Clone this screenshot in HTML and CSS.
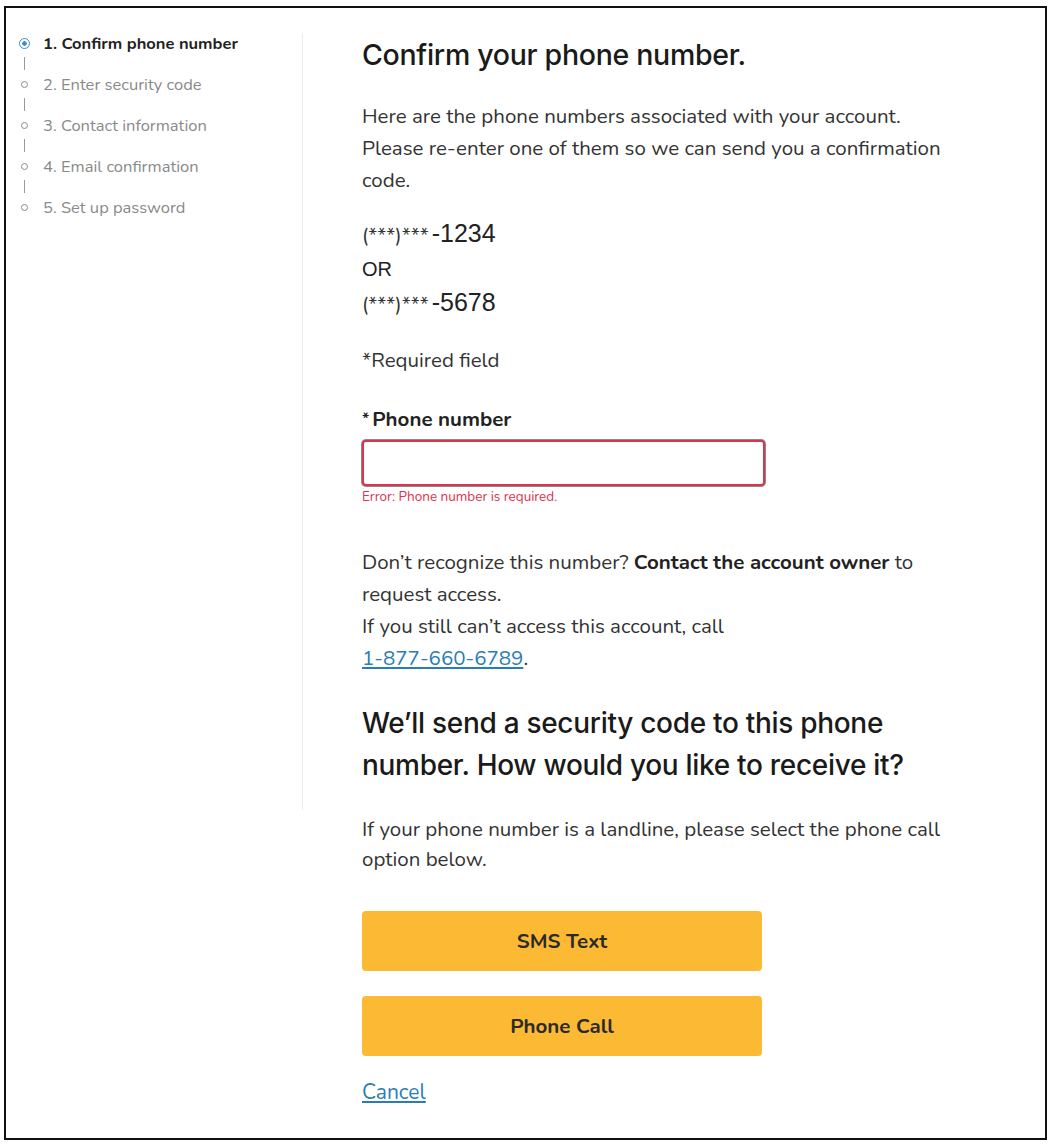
FILE: index.html
```html
<!DOCTYPE html>
<html lang="en">
  <head>
    <meta charset="UTF-8" />
    <meta name="viewport" content="width=device-width, initial-scale=1.0" />
    <title>Confirm your phone number</title>
    <link rel="stylesheet" href="styles.css">
  </head>
  <body>
    <div id="frame">
      <div id="steps">
        <ul>
          <li class="step step-sel"><span class="mark"><span class="dot"></span></span>1. Confirm phone number</li>
          <li class="bar"></li>
          <li class="step"><span class="mark"><span class="dot"></span></span>2. Enter security code</li>
          <li class="bar"></li>
          <li class="step"><span class="mark"><span class="dot"></span></span>3. Contact information</li>
          <li class="bar"></li>
          <li class="step"><span class="mark"><span class="dot"></span></span>4. Email confirmation</li>
          <li class="bar"></li>
          <li class="step"><span class="mark"><span class="dot"></span></span>5. Set up password</li>
        </ul>
      </div>

      <div id="main">
        <h1>Confirm your phone number.</h1>
        <p class="text intro">Here are the phone numbers associated with your account. Please re-enter one of them so we can send you a confirmation code.</p>

        <div class="numbers">
          <div><span class="mask">(***)***</span>-1234</div>
          <div class="or">OR</div>
          <div><span class="mask">(***)***</span>-5678</div>
        </div>

        <p class="text req">*Required field</p>

        <label class="label" for="phone"><span class="star">*</span>Phone number</label>
        <input id="phone" class="field" type="text" />
        <div class="error">Error: Phone number is required.</div>

        <p class="text help">Don’t recognize this number? <b>Contact the account owner</b> to request access.<br />If you still can’t access this account, call<br /><a href="#">1-877-660-6789</a>.</p>

        <h2>We’ll send a security code to this phone number. How would you like to receive it?</h2>
        <p class="text land">If your phone number is a landline, please select the phone call option below.</p>

        <div class="buttons">
          <button class="btn">SMS Text</button>
          <button class="btn">Phone Call</button>
        </div>
        <a href="#" class="cancel">Cancel</a>
      </div>
    </div>
  </body>
</html>
```

FILE: styles.css
```css
* {
  margin: 0;
  padding: 0;
  box-sizing: border-box;
}
li {
  list-style: none;
}
body {
  background: #fff;
  font-family: "Nunito", "Lato", "Open Sans", sans-serif;
  color: #333;
}

#frame {
  margin: 6px 0 0 4px;
  width: 1043px;
  height: 1134px;
  border: 2px solid #111;
  display: flex;
}

#steps {
  width: 297px;
  height: 777px;
  margin-top: 25px;
  padding: 0 0 0 13px;
  border-right: 1px solid #ececec;
  flex-shrink: 0;
}

.step {
  display: flex;
  align-items: center;
  height: 20px;
  font-size: 16.5px;
  color: #8a8a8a;
  white-space: nowrap;
}

.step .mark {
  width: 11px;
  display: flex;
  justify-content: center;
  margin-right: 13px;
}

.step .dot {
  width: 7px;
  height: 7px;
  border: 1.5px solid #8a8a8a;
  border-radius: 50%;
}

.step-sel {
  color: #222;
  font-weight: bold;
}

.step-sel .dot {
  width: 11px;
  height: 11px;
  border-color: #3a8fd0;
  background: radial-gradient(circle, #3a8fd0 0 2px, #fff 2.5px);
}

.bar {
  width: 1px;
  height: 13px;
  margin: 4px 0 4px 5px;
  background: #9a9a9a;
}

#main {
  padding: 29px 0 0 59px;
  width: 700px;
}

h1 {
  font-family: "Inter", sans-serif;
  font-weight: 500;
  font-size: 28.5px;
  color: #1a1a1a;
  line-height: 36px;
  letter-spacing: -0.3px;
}

.text {
  font-size: 20.5px;
  line-height: 32px;
  color: #333;
  width: 600px;
}

.intro {
  margin-top: 27px;
}

.numbers {
  margin-top: 21px;
  font-family: "Liberation Sans", Arial, sans-serif;
  font-size: 25px;
  line-height: 32px;
  color: #222;
}

.numbers .mask {
  font-family: "Nunito", "Lato", sans-serif;
  font-size: 20px;
  color: #333;
  margin-right: 3px;
}

.numbers .or {
  font-size: 20px;
  line-height: 34px;
}

.req {
  margin-top: 23px;
}

.label {
  display: block;
  margin-top: 30px;
  font-size: 20.5px;
  font-weight: bold;
  color: #222;
  line-height: 26px;
}

.label .star {
  font-size: 16px;
  margin-right: 3px;
  vertical-align: 2px;
}

.field {
  display: block;
  margin-top: 8px;
  width: 403px;
  height: 46px;
  border: 2px solid #d8364f;
  border-radius: 4px;
  box-shadow: 0 0 0 1px #8a8a8a;
  outline: none;
}

.error {
  margin-top: 2px;
  font-size: 13.5px;
  line-height: 18px;
  color: #e0304e;
}

.help {
  margin-top: 40px;
}

.help b {
  color: #222;
}

.help a {
  color: #2a7db4;
}

h2 {
  margin-top: 28px;
  width: 600px;
  font-family: "Inter", sans-serif;
  font-weight: 500;
  font-size: 28px;
  line-height: 42px;
  color: #1a1a1a;
  letter-spacing: -0.3px;
}

.land {
  margin-top: 28px;
  line-height: 30px;
}

.buttons {
  margin-top: 37px;
  display: flex;
  flex-direction: column;
  gap: 25px;
}

.btn {
  width: 400px;
  height: 60px;
  background: #fbb934;
  border: none;
  border-radius: 4px;
  font-family: "Nunito", "Lato", sans-serif;
  font-size: 20.5px;
  font-weight: bold;
  color: #2a2a2a;
}

.cancel {
  display: inline-block;
  margin-top: 22px;
  font-size: 21px;
  line-height: 28px;
  color: #2a7db4;
}
```
